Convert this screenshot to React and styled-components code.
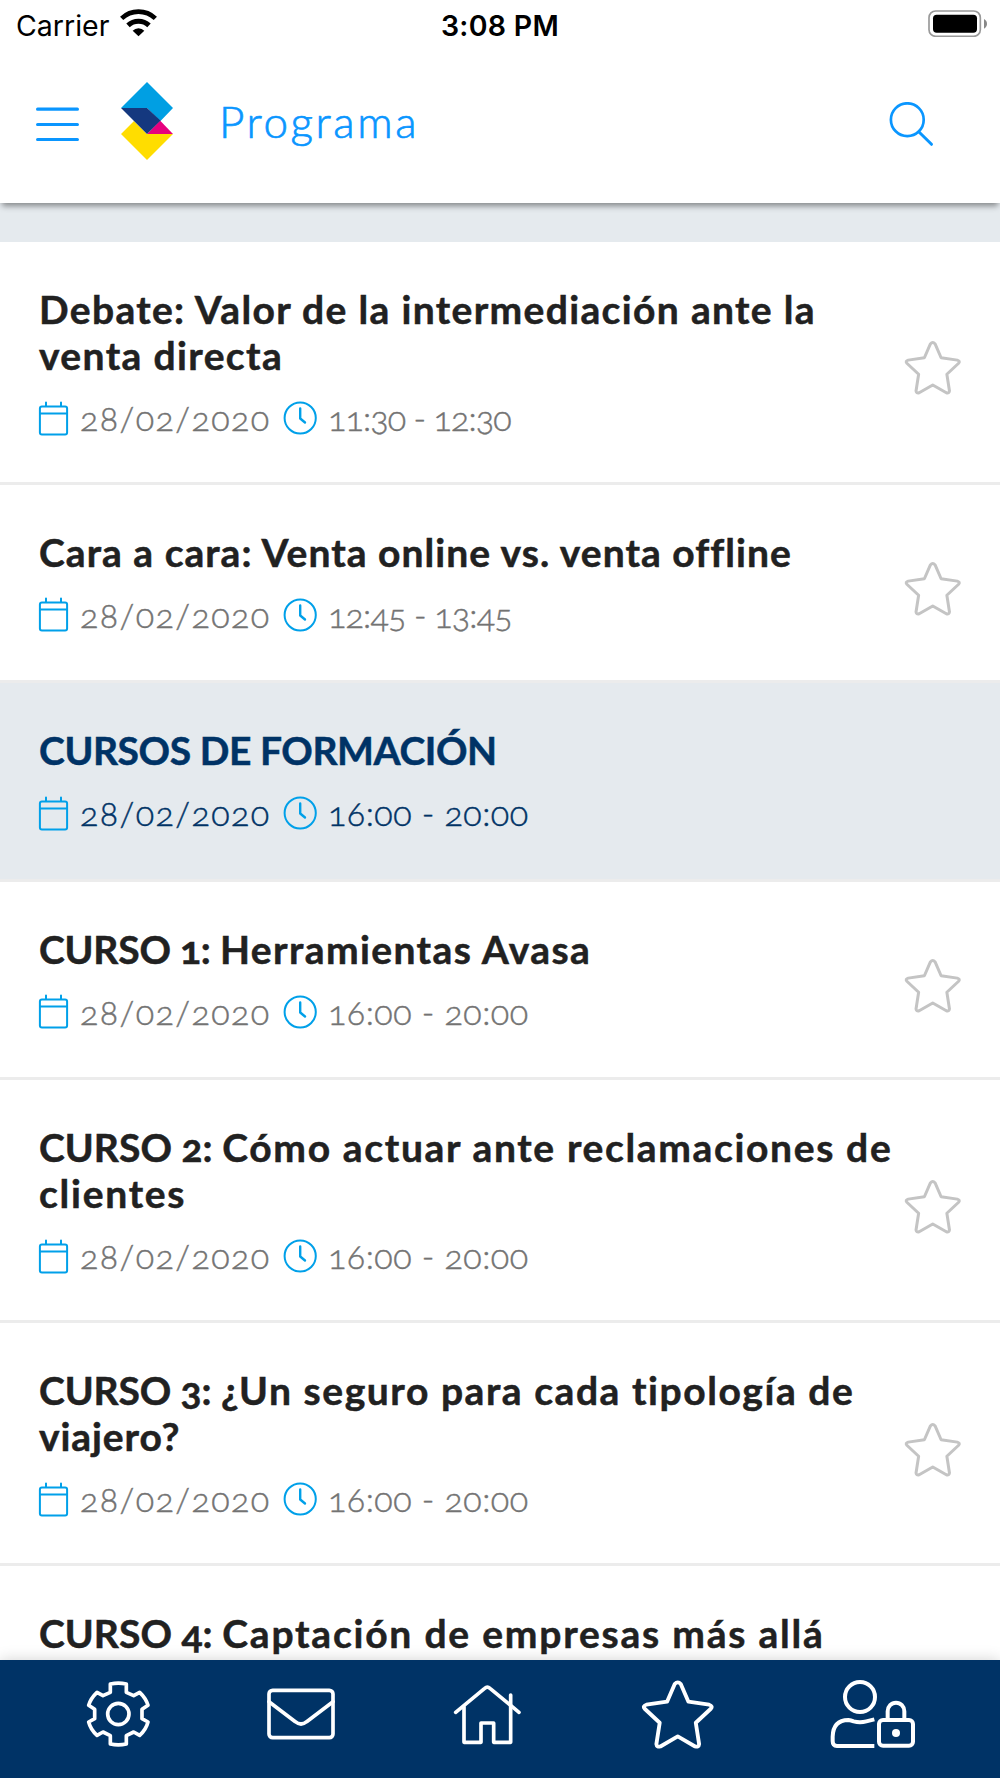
import styled, { createGlobalStyle } from "styled-components";

const GlobalStyle = createGlobalStyle`
  * {
    box-sizing: border-box;
  }

  body {
    margin: 0;
    background: #fff;
    font-family: Lato, "Liberation Sans", sans-serif;
    font-variant-numeric: oldstyle-nums;
  }
`;

const Screen = styled.div`
  display: flex;
  flex-direction: column;
  width: 1000px;
  height: 1778px;
  overflow: hidden;
`;

const Header = styled.header`
  position: relative;
  z-index: 1;
  flex: none;
  height: 203px;
  background: #fff;
  box-shadow: 0 5px 6px -2px rgba(0, 0, 0, 0.42);
`;

const StatusBar = styled.div`
  display: grid;
  grid-template-columns: 1fr auto 1fr;
  align-items: center;
  height: 50px;
  padding: 0 12px;
  font-family: Inter, sans-serif;
  font-size: 28.5px;
  color: #000;
`;

const Carrier = styled.div`
  display: flex;
  align-items: center;
  gap: 11px;
  margin-left: 4px;
`;

const Clock = styled.div`
  font-weight: 600;
  letter-spacing: 0.3px;
`;

const Toolbar = styled.div`
  display: flex;
  align-items: center;
  height: 149px;
  padding: 0 66px 0 36px;
  color: #0a96ff;
`;

const Title = styled.h1`
  flex: 1;
  margin: 0 0 0 45px;
  padding-bottom: 7px;
  font-size: 44px;
  font-weight: 300;
  letter-spacing: 2.6px;
  -webkit-text-stroke: 0.7px currentColor;
`;

const Icon = styled.svg`
  display: block;
  flex: none;
  fill: none;
  stroke: currentColor;
  stroke-linecap: round;
  stroke-linejoin: round;
`;

const StatusIcon = styled(Icon)`
  margin-bottom: 4px;
  justify-self: end;
`;

const Logo = styled(Icon)`
  margin-left: 41px;
  stroke: none;
`;

const List = styled.main`
  flex: 1;
  min-height: 0;
  padding-top: 39px;
  overflow: hidden;
  background: #e5eaee;
`;

const Row = styled.article`
  display: flex;
  align-items: center;
  justify-content: space-between;
  min-height: ${(props) => (props.$tall ? "242.8px" : "198.5px")};
  padding-right: 38.5px;
  padding-left: 38px;
  border-bottom: 3px solid #ececec;
  background: ${(props) => (props.$section ? "#e5eaee" : "#fff")};
  color: ${(props) => (props.$section ? "#003366" : "#212121")};
`;

const RowBody = styled.div`
  align-self: flex-start;
  padding-top: 44px;
`;

const RowTitle = styled.h2`
  margin: 0 0 0 1px;
  font-size: 39px;
  font-weight: 700;
  line-height: 46px;
  white-space: nowrap;
  -webkit-text-stroke: 0.5px currentColor;
`;

const TitleLine = styled.span`
  display: block;
  width: max-content;
`;

const Tracked = styled.span`
  letter-spacing: ${(props) => props.$tracking}px;
`;

const Meta = styled.div`
  display: flex;
  align-items: center;
  height: 40px;
  margin-top: 20px;
  font-size: 34px;
  font-weight: 300;
  line-height: 40px;
  white-space: nowrap;
  color: ${(props) => (props.$section ? "#003366" : "#737373")};
  -webkit-text-stroke: 0.45px currentColor;

  svg {
    color: #00a0e9;
  }
`;

const MetaDate = styled(Tracked)`
  width: 203px;
  margin-left: 11px;
`;

const MetaTime = styled(Tracked)`
  margin-left: 11px;
`;

const StarSlot = styled.div`
  flex: none;
  margin-top: 12.5px;
  color: #c4c4c4;
`;

const TabBar = styled.nav`
  position: relative;
  display: grid;
  flex: none;
  grid-template-columns: 181px 186px 188px 189px 1fr;
  align-items: center;
  height: 118px;
  padding: 0 0 10px 86px;
  background: #003366;
  box-shadow: 0 0 14px rgba(0, 0, 0, 0.18);
  color: #fff;
`;

const MenuIcon = () => (
  <Icon width="43" height="35" viewBox="0 0 43 35" strokeWidth="3.2">
    <path d="M1.6 2.2H41.4M1.6 17.5H41.4M1.6 32.5H41.4" />
  </Icon>
);

const SearchIcon = () => (
  <Icon width="45" height="45" viewBox="0 0 45 45" strokeWidth="2.7">
    <circle cx="18.3" cy="17.7" r="16.4" />
    <path d="M30 30L42.5 42.3" strokeWidth="3" />
  </Icon>
);

const BrandLogo = () => (
  <Logo width="54" height="86" viewBox="0 0 54 86">
    <path d="M27 0L53 26 40.5 39 27 26H1z" fill="#009fe3" />
    <path d="M14 39L1 52 27 78 53 52H27z" fill="#ffdd00" />
    <path d="M40 38.5L53 52H27z" fill="#e6007e" />
    <path d="M1 26H27L40.5 38.5 27 52z" fill="#14387f" />
  </Logo>
);

const WifiIcon = () => (
  <StatusIcon width="37" height="28" viewBox="360 29 111 84">
    <g strokeLinecap="butt">
      <path d="M365 57A73 73 0 0 1 466 57" strokeWidth="14" />
      <path d="M384 78A46 46 0 0 1 447 78" strokeWidth="15" />
    </g>
    <path d="M415.5 111L398 94A24 24 0 0 1 433 94z" fill="#000" stroke="none" />
  </StatusIcon>
);

const BatteryIcon = () => (
  <StatusIcon width="60" height="27" viewBox="1284 31 180 81">
    <rect x="1287" y="34" width="154" height="76" rx="20" stroke="#999" strokeWidth="5" />
    <rect x="1299" y="45" width="132" height="54" rx="11" fill="#000" stroke="none" />
    <path d="M1452 58Q1461 63 1461 72.5T1452 87z" fill="#888" stroke="none" />
  </StatusIcon>
);

const CalendarIcon = () => (
  <Icon width="31" height="35" viewBox="0 0 31 35" strokeWidth="2">
    <rect x="1.9" y="5.5" width="27.2" height="28" rx="2" />
    <path d="M2 12.5H29M8 1.5V5M23 1.5V5" />
  </Icon>
);

const TimeIcon = () => (
  <Icon width="34" height="34" viewBox="0 0 34 34" strokeWidth="2">
    <circle cx="17.2" cy="17" r="15.6" />
    <path d="M17.2 7.5V17.5L22 21.5" strokeWidth="2.4" />
  </Icon>
);

const StarIcon = ({ width }) => (
  <Icon width={width} viewBox="664 86 220 212" strokeWidth="11.5">
    <path d="M783 101L806 154 868 163Q880 167 873 175L828 217 838 281Q837 291 826 288L774 258 722 288Q711 291 710 281L720 217 675 175Q668 167 680 163L742 154 765 101Q774 91 783 101z" />
  </Icon>
);

const GearIcon = () => (
  <Icon width="65" height="68" viewBox="78 90 195 204" strokeWidth="11">
    <path d="M151 102Q175 97 199 102V127L221 137 239 127Q258 145 264 166L246 178V206L264 216Q258 239 239 256L221 246 199 257V282Q175 287 151 282V257L129 246 111 256Q92 239 86 216L104 206V178L86 166Q92 145 111 127L129 137 151 127z" />
    <circle cx="175" cy="192" r="32" />
  </Icon>
);

const MailIcon = () => (
  <Icon width="68" height="52" viewBox="619 114 204 156" strokeWidth="11">
    <rect x="625" y="121" width="192" height="142" rx="11" />
    <path d="M625 155L704 215Q721 229 738 215L817 155" />
  </Icon>
);

const HomeIcon = () => (
  <Icon width="69" height="61" viewBox="99 99 207 183" strokeWidth="11">
    <path d="M107 184L194 112Q202 105 210 112L297 184" />
    <path d="M132 168V274H183V216H221V274H272V132" />
  </Icon>
);

const UserLockIcon = () => (
  <Icon width="86" height="70" viewBox="151 117 258 210" strokeWidth="12">
    <circle cx="241" cy="171" r="45" />
    <path
      d="M284 318H172Q159 317 159 303V290Q160 241 206 240 214 241 222 244 241 249 260 244L284 238"
      strokeLinecap="butt"
    />
    <rect x="298" y="240" width="102" height="77" rx="12" />
    <path d="M324 239V214A25 26 0 0 1 374 214V239" />
    <circle cx="349" cy="279" r="12" fill="currentColor" stroke="none" />
  </Icon>
);

// Title lines are split in runs of [text, letter-spacing].
const sessions = [
  {
    lines: [
      [["Debate: Valor de la intermediación ante la", 1.34]],
      [["venta directa", 1.37]],
    ],
    time: "11:30 - 12:30",
    timeTracking: -0.88,
  },
  {
    lines: [[["Cara a cara: Venta online vs. venta offline", 1.03]]],
    time: "12:45 - 13:45",
    timeTracking: -0.8,
  },
  {
    lines: [[["CURSOS DE FORMACIÓN", -0.42]]],
    time: "16:00 - 20:00",
    timeTracking: 0.48,
    section: true,
  },
  {
    lines: [
      [
        ["CURSO 1: ", -0.2],
        ["Herramientas Avasa", 1.4],
      ],
    ],
    time: "16:00 - 20:00",
    timeTracking: 0.48,
  },
  {
    lines: [
      [
        ["CURSO 2: ", 0.05],
        ["Cómo actuar ante reclamaciones de", 1.65],
      ],
      [["clientes", 1.75]],
    ],
    time: "16:00 - 20:00",
    timeTracking: 0.48,
  },
  {
    lines: [
      [
        ["CURSO 3: ", -0.1],
        ["¿Un seguro para cada tipología de", 1.56],
      ],
      [["viajero?", 0.9]],
    ],
    time: "16:00 - 20:00",
    timeTracking: 0.48,
  },
  {
    lines: [
      [
        ["CURSO 4: ", 0.05],
        ["Captación de empresas más allá", 1.78],
      ],
    ],
    tall: true,
  },
];

function Session({ lines, time, timeTracking, section, tall }) {
  return (
    <Row $section={section} $tall={tall || lines.length > 1}>
      <RowBody>
        <RowTitle>
          {lines.map((runs) => (
            <TitleLine key={runs[0][0]}>
              {runs.map(([text, tracking]) => (
                <Tracked key={text} $tracking={tracking}>
                  {text}
                </Tracked>
              ))}
            </TitleLine>
          ))}
        </RowTitle>
        {time && (
          <Meta $section={section}>
            <CalendarIcon />
            <MetaDate $tracking={1.4}>28/02/2020</MetaDate>
            <TimeIcon />
            <MetaTime $tracking={timeTracking}>{time}</MetaTime>
          </Meta>
        )}
      </RowBody>
      {!section && (
        <StarSlot>
          <StarIcon width="57.5" />
        </StarSlot>
      )}
    </Row>
  );
}

export default function App() {
  return (
    <Screen>
      <GlobalStyle />
      <Header>
        <StatusBar>
          <Carrier>
            Carrier
            <WifiIcon />
          </Carrier>
          <Clock>3:08 PM</Clock>
          <BatteryIcon />
        </StatusBar>
        <Toolbar>
          <MenuIcon />
          <BrandLogo />
          <Title>Programa</Title>
          <SearchIcon />
        </Toolbar>
      </Header>
      <List>
        {sessions.map((session) => (
          <Session key={session.lines[0][0][0]} {...session} />
        ))}
      </List>
      <TabBar>
        <GearIcon />
        <MailIcon />
        <HomeIcon />
        <StarIcon width="73.5" />
        <UserLockIcon />
      </TabBar>
    </Screen>
  );
}
